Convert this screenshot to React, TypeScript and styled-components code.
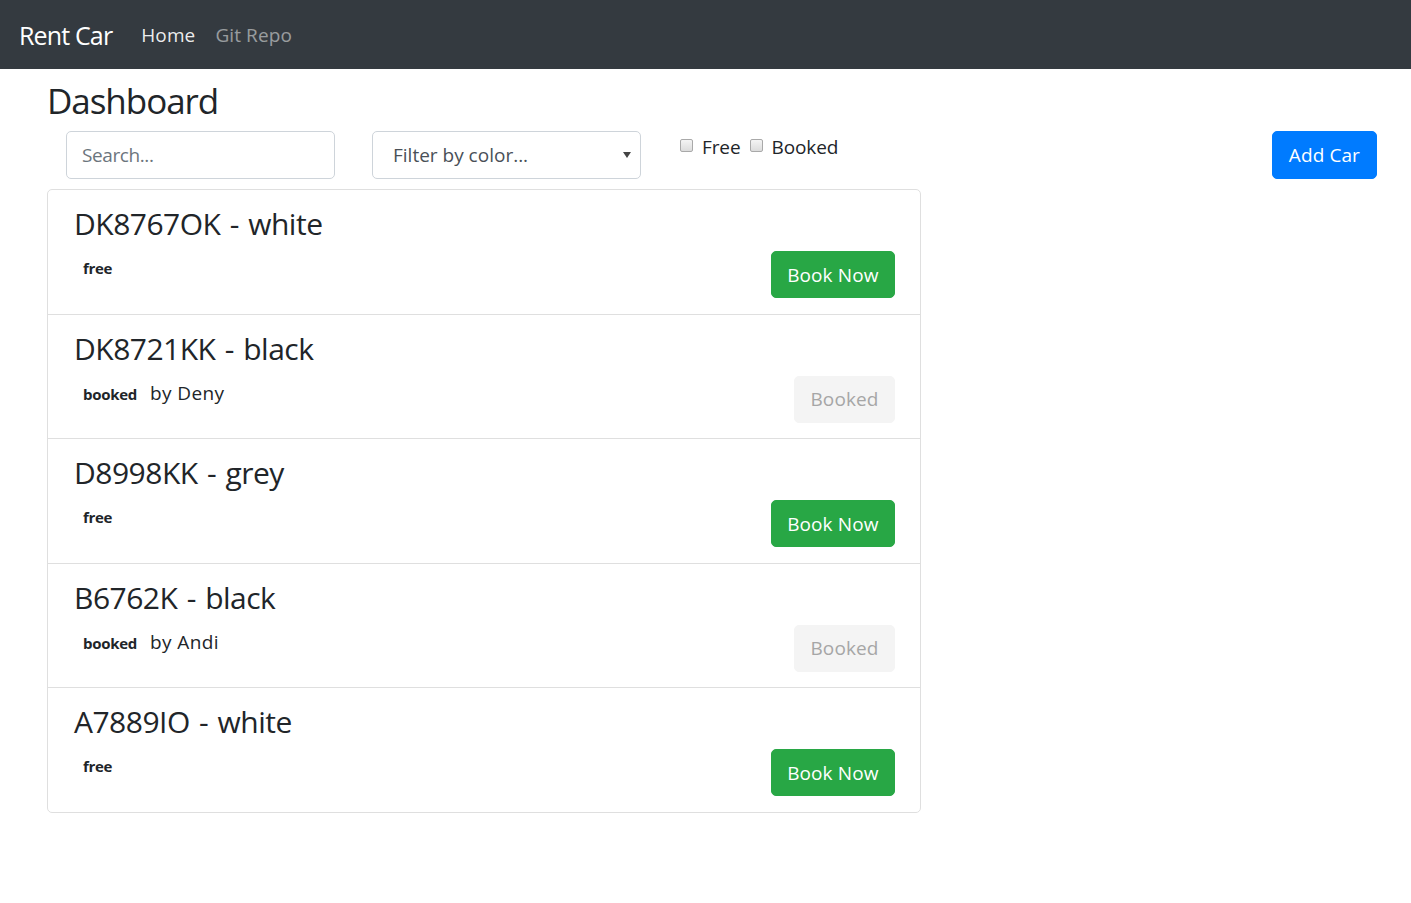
import React from "react";
import styled, { createGlobalStyle } from "styled-components";

const Global = createGlobalStyle`
  html, body { margin: 0; padding: 0; background: #fff; }
  body {
    font-family: "Open Sans", "Noto Sans", "Liberation Sans", sans-serif;
    font-size: 20px;
    line-height: 1.5;
    color: #212529;
  }
  * { box-sizing: border-box; }
`;

const Navbar = styled.nav`
  height: 69px;
  background: #343a40;
  display: flex;
  align-items: center;
  padding: 2px 20px 0 19px;
`;

const Brand = styled.a`
  font-size: 25px;
  color: #fff;
  margin-right: 19px;
  text-decoration: none;
  letter-spacing: -0.85px;
`;

const NavLink = styled.a<{ $active?: boolean }>`
  font-size: 19px;
  padding: 0 10px;
  letter-spacing: 0.1px;
  color: ${(p) => (p.$active ? "rgba(255,255,255,0.92)" : "rgba(255,255,255,0.5)")};
  text-decoration: none;
`;

const Main = styled.main`
  padding: 0 34px 0 47px;
`;

const Title = styled.h2`
  margin: 11px 0 9px 0;
  font-size: 35px;
  font-weight: 500;
  line-height: 1.2;
  letter-spacing: -1.05px;
`;

const Toolbar = styled.div`
  display: flex;
  align-items: flex-start;
  padding-left: 19px;
`;

const Input = styled.input`
  width: 269px;
  height: 48px;
  border: 1px solid #ced4da;
  border-radius: 5px;
  padding: 0 15px;
  font: inherit;
  font-size: 19px;
  letter-spacing: -0.4px;
  color: #495057;
  &::placeholder { color: #6c757d; }
`;

const SelectWrap = styled.div`
  position: relative;
  margin-left: 37px;
`;

const Select = styled.select`
  appearance: none;
  width: 269px;
  height: 48px;
  border: 1px solid #ced4da;
  border-radius: 5px;
  padding: 0 20px;
  font: inherit;
  font-size: 19px;
  letter-spacing: 0px;
  color: #495057;
  background: #fff;
`;

const Arrow = styled.svg`
  position: absolute;
  right: 10px;
  top: 21px;
  pointer-events: none;
`;

const Checks = styled.div`
  display: flex;
  align-items: center;
  margin-left: 38px;
  padding-top: 1px;
  line-height: 30px;
`;

const CheckLabel = styled.label`
  display: flex;
  align-items: center;
  margin-right: 8px;
  font-size: 19px;
  letter-spacing: -0.1px;
`;

const Box = styled.input`
  appearance: none;
  width: 13px;
  height: 13px;
  margin: 0 9px 4px 1px;
  border: 1px solid #a9a9a9;
  border-radius: 2px;
  background: linear-gradient(#f4f4f4, #dcdcdc);
`;

const Button = styled.button<{ $variant: "primary" | "success" | "disabled" }>`
  font: inherit;
  font-size: 19px;
  letter-spacing: 0.1px;
  line-height: 30px;
  padding: 7.5px 15.5px;
  border-radius: 5px;
  border: 1px solid
    ${(p) => (p.$variant === "primary" ? "#007bff" : p.$variant === "success" ? "#28a745" : "#f4f4f4")};
  background: ${(p) => (p.$variant === "primary" ? "#007bff" : p.$variant === "success" ? "#28a745" : "#f4f4f4")};
  color: ${(p) => (p.$variant === "disabled" ? "#a6a6a6" : "#fff")};
  white-space: nowrap;
`;

const AddButton = styled(Button)`
  margin-left: auto;
  height: 48px;
  padding: 0 16px;
`;

const List = styled.ul`
  list-style: none;
  margin: 10px 0 0 0;
  padding: 0;
  width: 874px;
  border: 1px solid #dfdfdf;
  border-radius: 5px;
`;

const Item = styled.li`
  padding: 15px 25px 15px 26px;
  border-top: 1px solid #dfdfdf;
  height: 124.6px;
  &:first-child { border-top: none; height: 123.6px; }
`;

const CarTitle = styled.h4`
  margin: 1px 0 9px 0;
  font-size: 30px;
  font-weight: 500;
  line-height: 36px;
  letter-spacing: -0.5px;
  word-spacing: 2px;
`;

const Row = styled.div`
  display: flex;
  justify-content: space-between;
  align-items: flex-start;
`;

const Status = styled.div`
  display: flex;
  align-items: baseline;
  padding-top: 2px;
  line-height: 30px;
`;

const Badge = styled.span`
  font-size: 15px;
  font-weight: 700;
  padding: 0 6px;
  margin-left: 3px;
  letter-spacing: -0.3px;
`;

const By = styled.span`
  font-size: 19px;
  margin-left: 7px;
  letter-spacing: 0.4px;
`;

type Car = { plate: string; color: string; booked?: string };

const cars: Car[] = [
  { plate: "DK8767OK", color: "white" },
  { plate: "DK8721KK", color: "black", booked: "Deny" },
  { plate: "D8998KK", color: "grey" },
  { plate: "B6762K", color: "black", booked: "Andi" },
  { plate: "A7889IO", color: "white" },
];

export default function App() {
  return (
    <>
      <Global />
      <Navbar>
        <Brand href="#">Rent Car</Brand>
        <NavLink href="#" $active>Home</NavLink>
        <NavLink href="#">Git Repo</NavLink>
      </Navbar>
      <Main>
        <Title>Dashboard</Title>
        <Toolbar>
          <Input placeholder="Search..." />
          <SelectWrap>
            <Select defaultValue="">
              <option value="">Filter by color...</option>
            </Select>
            <Arrow width="8" height="6" viewBox="0 0 8 6">
              <path d="M0 0 L8 0 L4 6 Z" fill="#444" />
            </Arrow>
          </SelectWrap>
          <Checks>
            <CheckLabel><Box type="checkbox" />Free</CheckLabel>
            <CheckLabel><Box type="checkbox" />Booked</CheckLabel>
          </Checks>
          <AddButton $variant="primary">Add Car</AddButton>
        </Toolbar>
        <List>
          {cars.map((c) => (
            <Item key={c.plate}>
              <CarTitle>{c.plate} - {c.color}</CarTitle>
              <Row>
                <Status>
                  <Badge>{c.booked ? "booked" : "free"}</Badge>
                  {c.booked && <By>by {c.booked}</By>}
                </Status>
                {c.booked ? (
                  <Button $variant="disabled" disabled>Booked</Button>
                ) : (
                  <Button $variant="success">Book Now</Button>
                )}
              </Row>
            </Item>
          ))}
        </List>
      </Main>
    </>
  );
}
